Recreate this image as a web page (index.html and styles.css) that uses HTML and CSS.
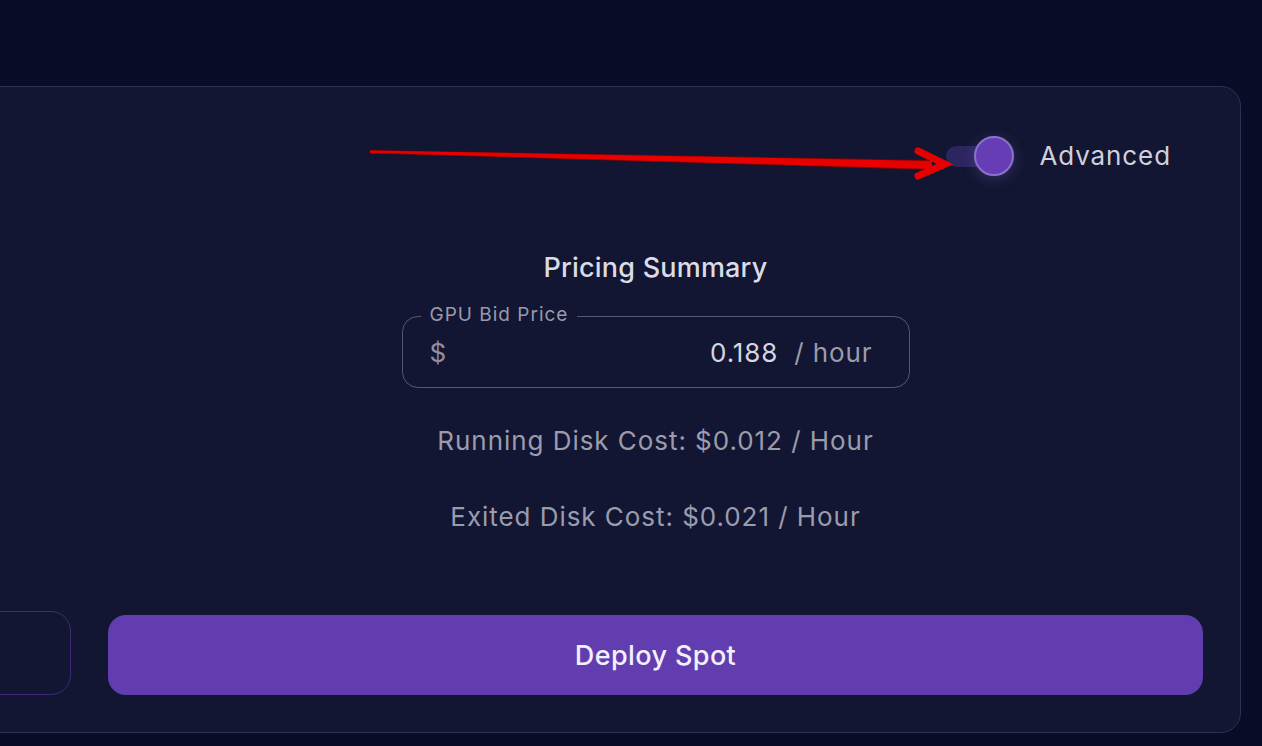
FILE: index.html
```html
<!DOCTYPE html>
<html>
<head>
<meta charset="utf-8">
<link rel="stylesheet" href="styles.css">
</head>
<body>
<div class="page">
  <div class="card">
    <div class="left-col">
      <div class="ghost-btn"></div>
    </div>
    <div class="right-col">
      <div class="toggle-row">
        <div class="switch">
          <div class="track"></div>
          <div class="thumb"></div>
        </div>
        <span class="toggle-label">Advanced</span>
      </div>
      <h2 class="title">Pricing Summary</h2>
      <div class="field">
        <span class="legend">GPU Bid Price</span>
        <span class="prefix">$</span>
        <span class="value">0.188</span>
        <span class="suffix">/ hour</span>
      </div>
      <p class="cost cost-running">Running Disk Cost: $0.012 / Hour</p>
      <p class="cost cost-exited">Exited Disk Cost: $0.021 / Hour</p>
      <button class="deploy">Deploy Spot</button>
    </div>
  </div>
  <svg class="arrow" width="1262" height="746" viewBox="0 0 1262 746">
    <polygon points="370,150 370,153.5 932,170 932,160" fill="#7a0000"/>
    <polygon points="370,150.5 370,152.8 932,169 932,161" fill="#e60000"/>
    <polyline points="918,151 945,164 918,176" fill="none" stroke="#e60000" stroke-width="7" stroke-linejoin="miter" stroke-linecap="round"/>
  </svg>
</div>
</body>
</html>
```
FILE: styles.css
```css
html, body {
  margin: 0;
  padding: 0;
  background: #090c27;
  font-family: Inter, "Noto Sans", sans-serif;
  overflow: hidden;
}
.page {
  position: relative;
  width: 1262px;
  height: 746px;
  padding-top: 86px;
  box-sizing: border-box;
}
.card {
  margin-left: -80px;
  width: 1321px;
  box-sizing: border-box;
  height: 647px;
  border: 1.5px solid #2e3150;
  border-radius: 20px;
  background: #131632;
  padding: 49px 37px 37px 38px;
  display: grid;
  grid-template-columns: 112px 1fr;
  column-gap: 37px;
}
.left-col {
  display: flex;
  align-items: flex-end;
}
.ghost-btn {
  width: 100%;
  height: 84px;
  box-sizing: border-box;
  border: 1.5px solid #3b2b76;
  border-radius: 20px;
}
.right-col {
  display: flex;
  flex-direction: column;
  align-items: center;
}
.toggle-row {
  align-self: stretch;
  display: flex;
  justify-content: flex-end;
  align-items: center;
  height: 40px;
  padding-right: 32px;
  gap: 25px;
}
.switch {
  position: relative;
  width: 68px;
  height: 40px;
}
.track {
  position: absolute;
  left: 0;
  top: 10px;
  width: 56px;
  height: 21px;
  border-radius: 11px;
  background: #2d2560;
}
.thumb {
  position: absolute;
  right: 0;
  top: 0;
  width: 40px;
  height: 40px;
  box-sizing: border-box;
  border-radius: 50%;
  background: #673db5;
  border: 2px solid #8a73cc;
  box-shadow: 0 3px 14px rgba(130, 110, 210, 0.28);
}
.toggle-label {
  font-size: 26px;
  letter-spacing: 0.9px;
  color: #cfd0dc;
  line-height: 32px;
}
.title {
  margin: 76px 0 0;
  font-size: 27px;
  line-height: 32px;
  font-weight: 500;
  letter-spacing: 0.2px;
  color: #dcdce6;
}
.field {
  position: relative;
  margin-top: 32px;
  width: 508px;
  height: 72px;
  box-sizing: border-box;
  border: 1.5px solid #55586f;
  border-radius: 16px;
  display: flex;
  align-items: center;
  padding: 0 36px 0 27px;
  font-size: 26px;
  letter-spacing: 0.9px;
}
.legend {
  position: absolute;
  left: 18px;
  top: -14px;
  padding: 0 9px;
  background: #131632;
  font-size: 19px;
  letter-spacing: 1px;
  line-height: 24px;
  color: #9899ad;
}
.prefix {
  color: #8e8fa3;
}
.value {
  margin-left: auto;
  color: #d6d6e0;
}
.suffix {
  margin-left: 16px;
  color: #9a9bad;
}
.cost {
  margin: 0;
  font-size: 26px;
  letter-spacing: 0.95px;
  line-height: 32px;
  color: #9a9cae;
}
.cost-running {
  margin-top: 37px;
}
.cost-exited {
  margin-top: 44px;
}
.deploy {
  margin-top: auto;
  align-self: stretch;
  height: 80px;
  border: none;
  border-radius: 18px;
  background: #623db0;
  color: #f2f0fa;
  font-family: Inter, "Noto Sans", sans-serif;
  font-size: 27px;
  letter-spacing: 0.4px;
  font-weight: 500;
}
.arrow {
  position: absolute;
  left: 0;
  top: 0;
  pointer-events: none;
}
```
